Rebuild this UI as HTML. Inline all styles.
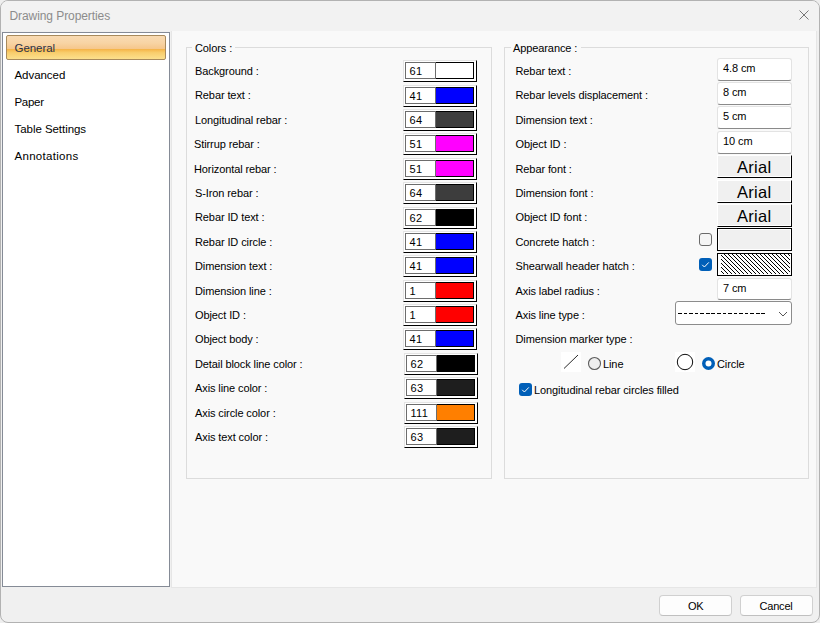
<!DOCTYPE html>
<html><head><meta charset="utf-8">
<style>
html,body{margin:0;padding:0;}
body{width:820px;height:623px;overflow:hidden;background:#eeeeee;position:relative;font-family:"Liberation Sans",sans-serif;}
.t{position:absolute;white-space:nowrap;}
.b{position:absolute;box-sizing:border-box;}
svg{position:absolute;overflow:visible;}
</style></head><body>
<div class="b" style="left:0px;top:0px;width:820px;height:623px;border:1px solid #b2b2b2;border-radius:8px;background:#f0f0f0;"></div>
<div class="b" style="left:1px;top:1px;width:818px;height:30px;background:#f2f2f2;border-radius:7px 7px 0 0;"></div>
<div class="t" style="left:9.5px;top:8.64px;font-size:12px;line-height:14px;letter-spacing:-0.08px;color:#8c8c8c;">Drawing Properties</div>
<svg style="left:0;top:0" width="820" height="623"><path d="M799.5 10.5 L808.5 19.5 M808.5 10.5 L799.5 19.5" stroke="#777777" stroke-width="1" fill="none"/></svg>
<div class="b" style="left:2px;top:32px;width:168px;height:555px;border:1px solid #858b96;background:#fff;"></div>
<div class="b" style="left:6px;top:35px;width:160px;height:25px;border:1px solid #a88a5c;border-radius:2px;background:linear-gradient(to bottom,#f9dbb3 0%,#f8d4a4 30%,#f6c78c 55%,#f5b245 56.5%,#f8cd6c 72%,#fce08d 100%);"></div>
<div class="t" style="left:14.5px;top:41.02px;font-size:11.5px;line-height:14px;letter-spacing:-0.05px;color:#2a3148;">General</div>
<div class="t" style="left:14.5px;top:68.02px;font-size:11.5px;line-height:14px;letter-spacing:-0.05px;color:#000;">Advanced</div>
<div class="t" style="left:14.5px;top:95.02px;font-size:11.5px;line-height:14px;letter-spacing:-0.3px;color:#000;">Paper</div>
<div class="t" style="left:14.5px;top:122.02px;font-size:11.5px;line-height:14px;letter-spacing:-0.05px;color:#000;">Table Settings</div>
<div class="t" style="left:14.5px;top:149.02px;font-size:11.5px;line-height:14px;letter-spacing:0.3px;color:#000;">Annotations</div>
<div class="b" style="left:171px;top:31px;width:646px;height:557px;border:1px solid #e6e6e6;border-top:none;background:#f9f9f9;"></div>
<div class="b" style="left:186px;top:47px;width:306px;height:432px;border:1px solid #dcdcdc;"></div>
<div class="b" style="left:192px;top:40px;width:43px;height:15px;background:#f9f9f9;"></div>
<div class="t" style="left:195px;top:41.69px;font-size:11px;line-height:13px;letter-spacing:-0.1px;color:#000;">Colors :</div>
<div class="b" style="left:504px;top:47px;width:305px;height:432px;border:1px solid #dcdcdc;"></div>
<div class="b" style="left:511px;top:40px;width:70px;height:15px;background:#f9f9f9;"></div>
<div class="t" style="left:513px;top:41.69px;font-size:11px;line-height:13px;letter-spacing:-0.1px;color:#000;">Appearance :</div>
<div class="t" style="left:195px;top:64.69px;font-size:11px;line-height:13px;letter-spacing:-0.1px;color:#000;">Background :</div>
<div class="b" style="left:403px;top:60px;width:74px;height:22px;border-top:1px solid #e4e4e4;border-left:1px solid #e4e4e4;border-right:1px solid #000;border-bottom:1px solid #000;background:#fff;"></div>
<div class="b" style="left:405px;top:62px;width:31px;height:17px;border:1px solid #6d6d6d;background:#fff;"></div>
<div class="b" style="left:436px;top:62px;width:38px;height:17px;border:1px solid #000;border-left:none;background:#ffffff;"></div>
<div class="t" style="left:409.5px;top:64.69px;font-size:11px;line-height:13px;letter-spacing:0.3px;color:#000;">61</div>
<div class="t" style="left:195px;top:88.69px;font-size:11px;line-height:13px;letter-spacing:-0.1px;color:#000;">Rebar text :</div>
<div class="b" style="left:403px;top:85px;width:74px;height:22px;border-top:1px solid #e4e4e4;border-left:1px solid #e4e4e4;border-right:1px solid #000;border-bottom:1px solid #000;background:#fff;"></div>
<div class="b" style="left:405px;top:87px;width:31px;height:17px;border:1px solid #6d6d6d;background:#fff;"></div>
<div class="b" style="left:436px;top:87px;width:38px;height:17px;border:1px solid #000;border-left:none;background:#0000ff;"></div>
<div class="t" style="left:409.5px;top:89.69px;font-size:11px;line-height:13px;letter-spacing:0.3px;color:#000;">41</div>
<div class="t" style="left:195px;top:113.69px;font-size:11px;line-height:13px;letter-spacing:-0.1px;color:#000;">Longitudinal rebar :</div>
<div class="b" style="left:403px;top:109px;width:74px;height:22px;border-top:1px solid #e4e4e4;border-left:1px solid #e4e4e4;border-right:1px solid #000;border-bottom:1px solid #000;background:#fff;"></div>
<div class="b" style="left:405px;top:111px;width:31px;height:17px;border:1px solid #6d6d6d;background:#fff;"></div>
<div class="b" style="left:436px;top:111px;width:38px;height:17px;border:1px solid #000;border-left:none;background:#3d3d3d;"></div>
<div class="t" style="left:409.5px;top:113.69px;font-size:11px;line-height:13px;letter-spacing:0.3px;color:#000;">64</div>
<div class="t" style="left:194px;top:137.69px;font-size:11px;line-height:13px;letter-spacing:-0.1px;color:#000;">Stirrup rebar :</div>
<div class="b" style="left:403px;top:133px;width:74px;height:22px;border-top:1px solid #e4e4e4;border-left:1px solid #e4e4e4;border-right:1px solid #000;border-bottom:1px solid #000;background:#fff;"></div>
<div class="b" style="left:405px;top:135px;width:31px;height:17px;border:1px solid #6d6d6d;background:#fff;"></div>
<div class="b" style="left:436px;top:135px;width:38px;height:17px;border:1px solid #000;border-left:none;background:#ff00ff;"></div>
<div class="t" style="left:409.5px;top:137.69px;font-size:11px;line-height:13px;letter-spacing:0.3px;color:#000;">51</div>
<div class="t" style="left:194px;top:162.69px;font-size:11px;line-height:13px;letter-spacing:-0.1px;color:#000;">Horizontal rebar :</div>
<div class="b" style="left:403px;top:158px;width:74px;height:22px;border-top:1px solid #e4e4e4;border-left:1px solid #e4e4e4;border-right:1px solid #000;border-bottom:1px solid #000;background:#fff;"></div>
<div class="b" style="left:405px;top:160px;width:31px;height:17px;border:1px solid #6d6d6d;background:#fff;"></div>
<div class="b" style="left:436px;top:160px;width:38px;height:17px;border:1px solid #000;border-left:none;background:#ff00ff;"></div>
<div class="t" style="left:409.5px;top:162.69px;font-size:11px;line-height:13px;letter-spacing:0.3px;color:#000;">51</div>
<div class="t" style="left:195px;top:186.69px;font-size:11px;line-height:13px;letter-spacing:-0.1px;color:#000;">S-Iron rebar :</div>
<div class="b" style="left:403px;top:182px;width:74px;height:22px;border-top:1px solid #e4e4e4;border-left:1px solid #e4e4e4;border-right:1px solid #000;border-bottom:1px solid #000;background:#fff;"></div>
<div class="b" style="left:405px;top:184px;width:31px;height:17px;border:1px solid #6d6d6d;background:#fff;"></div>
<div class="b" style="left:436px;top:184px;width:38px;height:17px;border:1px solid #000;border-left:none;background:#3d3d3d;"></div>
<div class="t" style="left:409.5px;top:186.69px;font-size:11px;line-height:13px;letter-spacing:0.3px;color:#000;">64</div>
<div class="t" style="left:195px;top:210.69px;font-size:11px;line-height:13px;letter-spacing:-0.1px;color:#000;">Rebar ID text :</div>
<div class="b" style="left:403px;top:207px;width:74px;height:22px;border-top:1px solid #e4e4e4;border-left:1px solid #e4e4e4;border-right:1px solid #000;border-bottom:1px solid #000;background:#fff;"></div>
<div class="b" style="left:405px;top:209px;width:31px;height:17px;border:1px solid #6d6d6d;background:#fff;"></div>
<div class="b" style="left:436px;top:209px;width:38px;height:17px;border:1px solid #000;border-left:none;background:#000000;"></div>
<div class="t" style="left:409.5px;top:211.69px;font-size:11px;line-height:13px;letter-spacing:0.3px;color:#000;">62</div>
<div class="t" style="left:195px;top:235.69px;font-size:11px;line-height:13px;letter-spacing:-0.1px;color:#000;">Rebar ID circle :</div>
<div class="b" style="left:403px;top:231px;width:74px;height:22px;border-top:1px solid #e4e4e4;border-left:1px solid #e4e4e4;border-right:1px solid #000;border-bottom:1px solid #000;background:#fff;"></div>
<div class="b" style="left:405px;top:233px;width:31px;height:17px;border:1px solid #6d6d6d;background:#fff;"></div>
<div class="b" style="left:436px;top:233px;width:38px;height:17px;border:1px solid #000;border-left:none;background:#0000ff;"></div>
<div class="t" style="left:409.5px;top:235.69px;font-size:11px;line-height:13px;letter-spacing:0.3px;color:#000;">41</div>
<div class="t" style="left:195px;top:259.69px;font-size:11px;line-height:13px;letter-spacing:-0.1px;color:#000;">Dimension text :</div>
<div class="b" style="left:403px;top:255px;width:74px;height:22px;border-top:1px solid #e4e4e4;border-left:1px solid #e4e4e4;border-right:1px solid #000;border-bottom:1px solid #000;background:#fff;"></div>
<div class="b" style="left:405px;top:257px;width:31px;height:17px;border:1px solid #6d6d6d;background:#fff;"></div>
<div class="b" style="left:436px;top:257px;width:38px;height:17px;border:1px solid #000;border-left:none;background:#0000ff;"></div>
<div class="t" style="left:409.5px;top:259.69px;font-size:11px;line-height:13px;letter-spacing:0.3px;color:#000;">41</div>
<div class="t" style="left:195px;top:284.69px;font-size:11px;line-height:13px;letter-spacing:-0.1px;color:#000;">Dimension line :</div>
<div class="b" style="left:403px;top:280px;width:74px;height:22px;border-top:1px solid #e4e4e4;border-left:1px solid #e4e4e4;border-right:1px solid #000;border-bottom:1px solid #000;background:#fff;"></div>
<div class="b" style="left:405px;top:282px;width:31px;height:17px;border:1px solid #6d6d6d;background:#fff;"></div>
<div class="b" style="left:436px;top:282px;width:38px;height:17px;border:1px solid #000;border-left:none;background:#ff0000;"></div>
<div class="t" style="left:409.5px;top:284.69px;font-size:11px;line-height:13px;letter-spacing:0.3px;color:#000;">1</div>
<div class="t" style="left:195px;top:308.69px;font-size:11px;line-height:13px;letter-spacing:-0.1px;color:#000;">Object ID :</div>
<div class="b" style="left:403px;top:304px;width:74px;height:22px;border-top:1px solid #e4e4e4;border-left:1px solid #e4e4e4;border-right:1px solid #000;border-bottom:1px solid #000;background:#fff;"></div>
<div class="b" style="left:405px;top:306px;width:31px;height:17px;border:1px solid #6d6d6d;background:#fff;"></div>
<div class="b" style="left:436px;top:306px;width:38px;height:17px;border:1px solid #000;border-left:none;background:#ff0000;"></div>
<div class="t" style="left:409.5px;top:308.69px;font-size:11px;line-height:13px;letter-spacing:0.3px;color:#000;">1</div>
<div class="t" style="left:195px;top:332.69px;font-size:11px;line-height:13px;letter-spacing:-0.1px;color:#000;">Object body :</div>
<div class="b" style="left:403px;top:328px;width:74px;height:22px;border-top:1px solid #e4e4e4;border-left:1px solid #e4e4e4;border-right:1px solid #000;border-bottom:1px solid #000;background:#fff;"></div>
<div class="b" style="left:405px;top:330px;width:31px;height:17px;border:1px solid #6d6d6d;background:#fff;"></div>
<div class="b" style="left:436px;top:330px;width:38px;height:17px;border:1px solid #000;border-left:none;background:#0000ff;"></div>
<div class="t" style="left:409.5px;top:332.69px;font-size:11px;line-height:13px;letter-spacing:0.3px;color:#000;">41</div>
<div class="t" style="left:195px;top:357.69px;font-size:11px;line-height:13px;letter-spacing:-0.1px;color:#000;">Detail block line color :</div>
<div class="b" style="left:404px;top:353px;width:74px;height:22px;border-top:1px solid #e4e4e4;border-left:1px solid #e4e4e4;border-right:1px solid #000;border-bottom:1px solid #000;background:#fff;"></div>
<div class="b" style="left:406px;top:355px;width:31px;height:17px;border:1px solid #6d6d6d;background:#fff;"></div>
<div class="b" style="left:437px;top:355px;width:38px;height:17px;border:1px solid #000;border-left:none;background:#000000;"></div>
<div class="t" style="left:410.5px;top:357.69px;font-size:11px;line-height:13px;letter-spacing:0.3px;color:#000;">62</div>
<div class="t" style="left:195px;top:381.69px;font-size:11px;line-height:13px;letter-spacing:-0.1px;color:#000;">Axis line color :</div>
<div class="b" style="left:404px;top:377px;width:74px;height:22px;border-top:1px solid #e4e4e4;border-left:1px solid #e4e4e4;border-right:1px solid #000;border-bottom:1px solid #000;background:#fff;"></div>
<div class="b" style="left:406px;top:379px;width:31px;height:17px;border:1px solid #6d6d6d;background:#fff;"></div>
<div class="b" style="left:437px;top:379px;width:38px;height:17px;border:1px solid #000;border-left:none;background:#1e1e1e;"></div>
<div class="t" style="left:410.5px;top:381.69px;font-size:11px;line-height:13px;letter-spacing:0.3px;color:#000;">63</div>
<div class="t" style="left:195px;top:406.69px;font-size:11px;line-height:13px;letter-spacing:-0.1px;color:#000;">Axis circle color :</div>
<div class="b" style="left:404px;top:402px;width:74px;height:22px;border-top:1px solid #e4e4e4;border-left:1px solid #e4e4e4;border-right:1px solid #000;border-bottom:1px solid #000;background:#fff;"></div>
<div class="b" style="left:406px;top:404px;width:31px;height:17px;border:1px solid #6d6d6d;background:#fff;"></div>
<div class="b" style="left:437px;top:404px;width:38px;height:17px;border:1px solid #000;border-left:none;background:#ff7f00;"></div>
<div class="t" style="left:410.5px;top:406.69px;font-size:11px;line-height:13px;letter-spacing:0.3px;color:#000;">111</div>
<div class="t" style="left:195px;top:430.69px;font-size:11px;line-height:13px;letter-spacing:-0.1px;color:#000;">Axis text color :</div>
<div class="b" style="left:404px;top:426px;width:74px;height:22px;border-top:1px solid #e4e4e4;border-left:1px solid #e4e4e4;border-right:1px solid #000;border-bottom:1px solid #000;background:#fff;"></div>
<div class="b" style="left:406px;top:428px;width:31px;height:17px;border:1px solid #6d6d6d;background:#fff;"></div>
<div class="b" style="left:437px;top:428px;width:38px;height:17px;border:1px solid #000;border-left:none;background:#1e1e1e;"></div>
<div class="t" style="left:410.5px;top:430.69px;font-size:11px;line-height:13px;letter-spacing:0.3px;color:#000;">63</div>
<div class="t" style="left:515.5px;top:64.69px;font-size:11px;line-height:13px;letter-spacing:-0.1px;color:#000;">Rebar text :</div>
<div class="t" style="left:515.5px;top:88.69px;font-size:11px;line-height:13px;letter-spacing:-0.1px;color:#000;">Rebar levels displacement :</div>
<div class="t" style="left:515.5px;top:113.69px;font-size:11px;line-height:13px;letter-spacing:-0.1px;color:#000;">Dimension text :</div>
<div class="t" style="left:515.5px;top:137.69px;font-size:11px;line-height:13px;letter-spacing:-0.1px;color:#000;">Object ID :</div>
<div class="t" style="left:515.5px;top:162.69px;font-size:11px;line-height:13px;letter-spacing:-0.1px;color:#000;">Rebar font :</div>
<div class="t" style="left:515.5px;top:186.69px;font-size:11px;line-height:13px;letter-spacing:-0.1px;color:#000;">Dimension font :</div>
<div class="t" style="left:515.5px;top:210.69px;font-size:11px;line-height:13px;letter-spacing:-0.1px;color:#000;">Object ID font :</div>
<div class="t" style="left:515.5px;top:235.69px;font-size:11px;line-height:13px;letter-spacing:-0.1px;color:#000;">Concrete hatch :</div>
<div class="t" style="left:515.5px;top:259.69px;font-size:11px;line-height:13px;letter-spacing:-0.1px;color:#000;">Shearwall header hatch :</div>
<div class="t" style="left:515.5px;top:284.69px;font-size:11px;line-height:13px;letter-spacing:-0.1px;color:#000;">Axis label radius :</div>
<div class="t" style="left:515.5px;top:308.69px;font-size:11px;line-height:13px;letter-spacing:-0.1px;color:#000;">Axis line type :</div>
<div class="t" style="left:515.5px;top:332.69px;font-size:11px;line-height:13px;letter-spacing:-0.1px;color:#000;">Dimension marker type :</div>
<div class="b" style="left:717px;top:58px;width:75px;height:23px;border:1px solid #e3e3e3;border-bottom:1px solid #8a8a8a;border-radius:3px;background:#fff;"></div>
<div class="t" style="left:723px;top:61.69px;font-size:11px;line-height:13px;letter-spacing:-0.1px;color:#000;">4.8 cm</div>
<div class="b" style="left:717px;top:82px;width:75px;height:23px;border:1px solid #e3e3e3;border-bottom:1px solid #8a8a8a;border-radius:3px;background:#fff;"></div>
<div class="t" style="left:723px;top:85.69px;font-size:11px;line-height:13px;letter-spacing:-0.1px;color:#000;">8 cm</div>
<div class="b" style="left:717px;top:106px;width:75px;height:23px;border:1px solid #e3e3e3;border-bottom:1px solid #8a8a8a;border-radius:3px;background:#fff;"></div>
<div class="t" style="left:723px;top:109.69px;font-size:11px;line-height:13px;letter-spacing:-0.1px;color:#000;">5 cm</div>
<div class="b" style="left:717px;top:131px;width:75px;height:23px;border:1px solid #e3e3e3;border-bottom:1px solid #8a8a8a;border-radius:3px;background:#fff;"></div>
<div class="t" style="left:723px;top:134.69px;font-size:11px;line-height:13px;letter-spacing:-0.1px;color:#000;">10 cm</div>
<div class="b" style="left:717px;top:155px;width:75px;height:23px;border-top:1px solid #fff;border-left:1px solid #fff;border-right:1px solid #000;border-bottom:1px solid #000;background:#f0f0f0;box-shadow:inset -1px -1px 0 #fff;"></div>
<div class="t" style="left:737px;top:157.28px;font-size:16.5px;line-height:20px;letter-spacing:0.3px;color:#000;">Arial</div>
<div class="b" style="left:717px;top:180px;width:75px;height:23px;border-top:1px solid #fff;border-left:1px solid #fff;border-right:1px solid #000;border-bottom:1px solid #000;background:#f0f0f0;box-shadow:inset -1px -1px 0 #fff;"></div>
<div class="t" style="left:737px;top:182.28px;font-size:16.5px;line-height:20px;letter-spacing:0.3px;color:#000;">Arial</div>
<div class="b" style="left:717px;top:204px;width:75px;height:23px;border-top:1px solid #fff;border-left:1px solid #fff;border-right:1px solid #000;border-bottom:1px solid #000;background:#f0f0f0;box-shadow:inset -1px -1px 0 #fff;"></div>
<div class="t" style="left:737px;top:206.28px;font-size:16.5px;line-height:20px;letter-spacing:0.3px;color:#000;">Arial</div>
<div class="b" style="left:717px;top:228px;width:75px;height:23px;border:1px solid #000;background:#f0f0f0;box-shadow:inset 1px 1px 0 #fff,inset -1px -1px 0 #fff;"></div>
<div class="b" style="left:717px;top:253px;width:75px;height:23px;border:1px solid #000;background:#fff;"></div>
<svg style="left:721px;top:254px" width="69" height="20"><defs><pattern id="h" width="4" height="4" patternUnits="userSpaceOnUse"><rect x="3" y="0" width="1" height="1" fill="#000"/><rect x="0" y="1" width="1" height="1" fill="#000"/><rect x="1" y="2" width="1" height="1" fill="#000"/><rect x="2" y="3" width="1" height="1" fill="#000"/></pattern></defs><rect width="69" height="20" fill="url(#h)" shape-rendering="crispEdges"/></svg>
<div class="b" style="left:699px;top:233px;width:13px;height:13px;border:1px solid #6a6a6a;border-radius:3px;background:#f5f5f5;"></div>
<div class="b" style="left:699px;top:258px;width:13px;height:13px;border-radius:3px;background:#005fb8;"></div>
<svg style="left:699px;top:258px" width="13" height="13"><path d="M3.2 6.8 L5.4 9 L9.8 4.4" stroke="#fff" stroke-width="1" fill="none"/></svg>
<div class="b" style="left:717px;top:278px;width:75px;height:22px;border:1px solid #e3e3e3;border-bottom:1px solid #8a8a8a;border-radius:3px;background:#fff;"></div>
<div class="t" style="left:723px;top:281.69px;font-size:11px;line-height:13px;letter-spacing:-0.1px;color:#000;">7 cm</div>
<div class="b" style="left:675px;top:301px;width:117px;height:24px;border:1px solid #8c8c8c;border-radius:3px;background:#fff;"></div>
<svg style="left:0;top:0" width="820" height="623"><g fill="#000" shape-rendering="crispEdges"><rect x="678" y="313" width="4" height="1"/><rect x="684" y="313" width="3" height="1"/><rect x="689" y="313" width="4" height="1"/><rect x="695" y="313" width="3" height="1"/><rect x="700" y="313" width="4" height="1"/><rect x="706" y="313" width="4" height="1"/><rect x="711" y="313" width="4" height="1"/><rect x="717" y="313" width="4" height="1"/><rect x="723" y="313" width="3" height="1"/><rect x="728" y="313" width="4" height="1"/><rect x="734" y="313" width="3" height="1"/><rect x="739" y="313" width="4" height="1"/><rect x="745" y="313" width="3" height="1"/><rect x="750" y="313" width="4" height="1"/><rect x="756" y="313" width="4" height="1"/><rect x="761" y="313" width="4" height="1"/></g><path d="M779 312 L783 316 L787 312" stroke="#555" stroke-width="1" fill="none"/></svg>
<div class="b" style="left:561px;top:352px;width:20px;height:20px;background:#fff;"></div>
<svg style="left:0;top:0" width="820" height="623"><path d="M564 368.5 L578 355" stroke="#111" stroke-width="0.9" fill="none"/><circle cx="685" cy="362" r="7.6" stroke="#000" stroke-width="1.1" fill="none"/><circle cx="594.5" cy="363.5" r="6" stroke="#5c5c5c" stroke-width="1.1" fill="#eeeeee"/><circle cx="708.5" cy="363.5" r="6.5" fill="#005fb8"/><circle cx="708.5" cy="363.5" r="3" fill="#fff"/></svg>
<div class="b" style="left:675px;top:352px;width:20px;height:20px;background:#fff;z-index:0;"></div>
<svg style="left:0;top:0" width="820" height="623"><circle cx="685" cy="362" r="7.7" stroke="#000" stroke-width="0.95" fill="none"/></svg>
<div class="t" style="left:603px;top:357.69px;font-size:11px;line-height:13px;letter-spacing:-0.1px;color:#000;">Line</div>
<div class="t" style="left:717px;top:357.69px;font-size:11px;line-height:13px;letter-spacing:-0.1px;color:#000;">Circle</div>
<div class="b" style="left:519px;top:383px;width:13px;height:13px;border-radius:3px;background:#005fb8;"></div>
<svg style="left:519px;top:383px" width="13" height="13"><path d="M3.2 6.8 L5.4 9 L9.8 4.4" stroke="#fff" stroke-width="1" fill="none"/></svg>
<div class="t" style="left:534px;top:383.69px;font-size:11px;line-height:13px;letter-spacing:-0.1px;color:#000;">Longitudinal rebar circles filled</div>
<div class="b" style="left:659px;top:595px;width:73px;height:21px;border:1px solid #d0d0d0;border-bottom-color:#c0c0c0;border-radius:4px;background:#fdfdfd;"></div>
<div class="t" style="left:688px;top:599.69px;font-size:11px;line-height:13px;letter-spacing:-0.2px;color:#000;">OK</div>
<div class="b" style="left:740px;top:595px;width:73px;height:21px;border:1px solid #d0d0d0;border-bottom-color:#c0c0c0;border-radius:4px;background:#fdfdfd;"></div>
<div class="t" style="left:759.5px;top:599.69px;font-size:11px;line-height:13px;letter-spacing:-0.2px;color:#000;">Cancel</div>
</body></html>
